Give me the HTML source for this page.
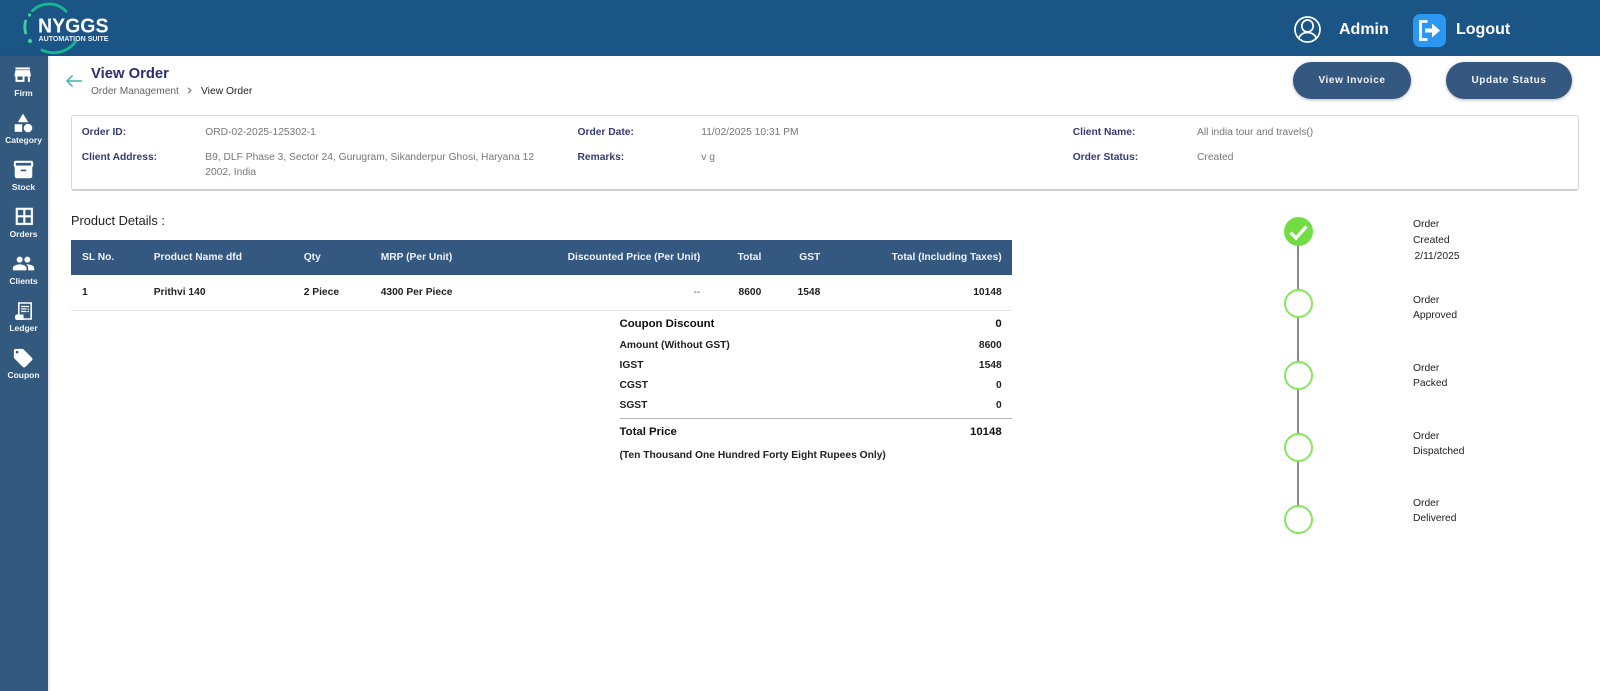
<!DOCTYPE html>
<html lang="en">
<head>
<meta charset="utf-8">
<title>View Order</title>
<style>
*{box-sizing:border-box}
html,body{margin:0;padding:0;width:1600px;height:691px;overflow:hidden;background:#fff;font-family:"Liberation Sans",Arial,sans-serif}
.a{position:absolute}
.t{position:absolute;white-space:nowrap;line-height:16px;height:16px}
.r{text-align:right}
.lb{font-size:10.25px;font-weight:bold;color:#363b72}
.vl{font-size:10.25px;color:#777}
.th{font-size:10.25px;font-weight:bold;color:#eef2f6}
.td{font-size:10.25px;font-weight:bold;color:#222}
.s{font-size:10.25px;font-weight:bold;color:#222}
.b{font-size:11.4px;font-weight:bold;color:#111}
.nav{font-size:8.5px;font-weight:bold;color:#f4f6f9;left:0;width:47px;text-align:center}
.tl{font-size:10.3px;color:#222}
.ic{position:absolute;fill:#fff;stroke:#fff;stroke-width:.25}
.btn{position:absolute;background:#34587f;border-radius:19px;color:#f2f5f8;font-size:10px;font-weight:bold;letter-spacing:.6px;text-align:center;line-height:37px;height:37px;box-shadow:0 1px 3px rgba(0,0,0,.3)}
.c{position:absolute;left:1283.5px;width:29px;height:29px;border-radius:50%;border:2px solid #85e65c;background:#fff}
</style>
</head>
<body>
<div class="a" style="left:0;top:0;width:1600px;height:56px;background:#1b5586"></div>
<svg class="a" style="left:0;top:0" width="130" height="56" viewBox="0 0 130 56">
<g fill="none" stroke-linecap="round">
<path d="M32.500 10.700A23.500 23.500 0 0 1 66 11.300" stroke="#16b98f" stroke-width="2.800"/>
<path d="M25.600 21A23.500 23.500 0 0 0 25.600 33" stroke="#3ed09a" stroke-width="2.800"/>
<path d="M42 50A27 27 0 0 0 76 41" stroke="#16b98f" stroke-width="2.800"/>
</g>
<circle cx="29.500" cy="15" r="1.600" fill="#3ed09a"/>
<circle cx="30" cy="41" r="2.100" fill="#3ed09a"/>
<text x="38" y="32.500" font-family="Liberation Sans" font-weight="bold" font-size="20.500" fill="#fff" textLength="70.500" lengthAdjust="spacingAndGlyphs">NYGGS</text>
<text x="38.500" y="41" font-family="Liberation Sans" font-weight="bold" font-size="7.500" fill="#e8eef4" textLength="70" lengthAdjust="spacingAndGlyphs">AUTOMATION SUITE</text>
</svg>

<svg class="a" style="left:1294px;top:16px" width="27" height="27" viewBox="0 0 27 27" fill="none" stroke="#fff" stroke-width="1.700">
<circle cx="13.500" cy="13.500" r="12.500"/>
<ellipse cx="13.500" cy="10" rx="5.700" ry="6"/>
<path d="M4.800 22.500C5.800 18.800 9 16.500 13.500 16.500s7.700 2.300 8.700 6"/>
</svg>
<div class="t" style="left:1339px;top:22px;font-size:16px;font-weight:bold;color:#fff">Admin</div>
<svg class="a" style="left:1413px;top:14px" width="33" height="33" viewBox="0 0 33 33">
<rect width="33" height="33" rx="7" fill="#2a97f0"/>
<path d="M14.500 7.500H7.500v18h7" fill="none" stroke="#fff" stroke-width="2.800"/>
<path d="M12 14.500h7V9.500l8 7-8 7v-5h-7z" fill="#fff"/>
</svg>
<div class="t" style="left:1456px;top:22px;font-size:16px;font-weight:bold;color:#fff">Logout</div>

<div class="a" style="left:0;top:56px;width:48px;height:635px;background:#34597f;box-shadow:1px 0 2px rgba(0,0,0,.15)"></div>
<svg class="ic" style="left:12.300px;top:64.400px" width="21.300" height="21.300" viewBox="0 0 24 24"><path d="M20 4H4v2h16V4zm1 10v-2l-1-5H4l-1 5v2h1v6h10v-6h4v6h2v-6h1zm-9 4H6v-4h6v4z"/></svg>
<div class="t nav" style="top:85px">Firm</div>
<svg class="ic" style="left:12.200px;top:112px" width="22" height="22" viewBox="0 0 24 24"><path d="M12 2l-5.500 9h11z"/><circle cx="17.500" cy="17.500" r="4.500"/><path d="M3 13.500h8v8H3z"/></svg>
<div class="t nav" style="top:132px">Category</div>
<svg class="ic" style="left:12.100px;top:158px" width="23" height="23" viewBox="0 0 24 24"><path d="M20 3H4a2 2 0 0 0-2 2v3c0 .7.4 1.400 1 1.700V19c0 1.100 1.100 2 2 2h14c.9 0 2-.9 2-2V9.700c.6-.3 1-1 1-1.700V5a2 2 0 0 0-2-2zm-5 11H9v-2h6v2zm5-6H4V5h16v3z"/></svg>
<div class="t nav" style="top:179px">Stock</div>
<svg class="ic" style="left:12.500px;top:205px" width="22.700" height="22.700" viewBox="0 0 24 24"><path d="M3 3v18h18V3H3zm8 16H5v-6h6v6zm0-8H5V5h6v6zm8 8h-6v-6h6v6zm0-8h-6V5h6v6z"/></svg>
<div class="t nav" style="top:225.500px">Orders</div>
<svg class="ic" style="left:12px;top:252px" width="23" height="23" viewBox="0 0 24 24"><path d="M16 11c1.660 0 2.990-1.340 2.990-3S17.660 5 16 5c-1.660 0-3 1.340-3 3s1.340 3 3 3zm-8 0c1.660 0 2.990-1.340 2.990-3S9.660 5 8 5C6.340 5 5 6.340 5 8s1.340 3 3 3zm0 2c-2.330 0-7 1.170-7 3.500V19h14v-2.500c0-2.330-4.670-3.500-7-3.500zm8 0c-.29 0-.62.02-.97.05 1.160.84 1.970 1.970 1.970 3.450V19h6v-2.500c0-2.330-4.670-3.500-7-3.500z"/></svg>
<div class="t nav" style="top:272.500px">Clients</div>
<svg class="a" style="left:15px;top:302px" width="17" height="18" viewBox="0 0 17 18">
<path d="M3.800 13V1h12.400v16H7" fill="none" stroke="#fff" stroke-width="1.600"/>
<path d="M6 4.500h8M6 7h5.500M12.500 7H14M6 9.500h5.500M12.500 9.500H14" stroke="#fff" stroke-width="1.300"/>
<path d="M0 14.500c0-1.200 1-2 2-2h6.500v3c0 1.500.8 2.500 2 2.500H2c-1.200 0-2-1-2-2z" fill="#fff"/>
</svg>
<div class="t nav" style="top:319.500px">Ledger</div>
<svg class="a" style="left:12px;top:347px;fill:#fff" width="22.300" height="22.300" viewBox="0 0 24 24"><path fill-rule="evenodd" d="M21.410 11.580l-9-9C12.050 2.220 11.550 2 11 2H4c-1.100 0-2 .9-2 2v7c0 .55.22 1.050.59 1.420l9 9c.36.36.86.58 1.410.58.55 0 1.050-.22 1.410-.59l7-7c.37-.36.59-.86.59-1.410 0-.55-.23-1.060-.59-1.420zM5.500 7C4.670 7 4 6.330 4 5.500S4.670 4 5.500 4 7 4.670 7 5.500 6.330 7 5.500 7z"/></svg>
<div class="t nav" style="top:366.500px">Coupon</div>

<svg class="a" style="left:65px;top:74px" width="18" height="14" viewBox="0 0 18 14" fill="none" stroke="#3db4b2" stroke-width="1.500"><path d="M17 7H2M7.500 1.500L2 7l5.500 5.500"/></svg>
<div class="t" style="left:91px;top:65.500px;font-size:14.800px;font-weight:bold;color:#2a2f6e">View Order</div>
<div class="t" style="left:91px;top:84px;font-size:10.150px;color:#666">Order Management</div>
<svg class="a" style="left:187px;top:87px" width="5" height="7" viewBox="0 0 5 7" fill="none" stroke="#666" stroke-width="1"><path d="M1 .7L4 3.500 1 6.300"/></svg>
<div class="t" style="left:201px;top:84px;font-size:10.300px;color:#222">View Order</div>

<div class="btn" style="left:1293px;top:62px;width:118px">View Invoice</div>
<div class="btn" style="left:1446px;top:62px;width:126px">Update Status</div>

<div class="a" style="left:71px;top:114.500px;width:1507.500px;height:76px;border:1px solid #d8d8d8;border-bottom:2px solid #d0d0d0;border-radius:3px;background:#fff"></div>
<div class="t lb" style="left:81.700px;top:125px">Order ID:</div>
<div class="t vl" style="left:205.300px;top:125px">ORD-02-2025-125302-1</div>
<div class="t lb" style="left:81.700px;top:150px">Client Address:</div>
<div class="t vl" style="left:205.300px;top:150px">B9, DLF Phase 3, Sector 24, Gurugram, Sikanderpur Ghosi, Haryana 12</div>
<div class="t vl" style="left:205.300px;top:165px">2002, India</div>
<div class="t lb" style="left:577.500px;top:125px">Order Date:</div>
<div class="t vl" style="left:701.300px;top:125px">11/02/2025 10:31 PM</div>
<div class="t lb" style="left:577.500px;top:150px">Remarks:</div>
<div class="t vl" style="left:701.300px;top:150px">v g</div>
<div class="t lb" style="left:1072.700px;top:125px">Client Name:</div>
<div class="t vl" style="left:1197px;top:125px">All india tour and travels()</div>
<div class="t lb" style="left:1072.700px;top:150px">Order Status:</div>
<div class="t vl" style="left:1197px;top:150px">Created</div>

<div class="t" style="left:71px;top:213px;font-size:12.800px;color:#222">Product Details :</div>

<div class="a" style="left:71px;top:240px;width:941px;height:35px;background:#34587f"></div>
<div class="t th" style="left:82px;top:250px">SL No.</div>
<div class="t th" style="left:153.700px;top:250px">Product Name dfd</div>
<div class="t th" style="left:303.700px;top:250px">Qty</div>
<div class="t th" style="left:380.700px;top:250px">MRP (Per Unit)</div>
<div class="t th r" style="right:899.700px;top:250px">Discounted Price (Per Unit)</div>
<div class="t th r" style="right:838.700px;top:250px">Total</div>
<div class="t th r" style="right:779.700px;top:250px">GST</div>
<div class="t th r" style="right:598.300px;top:250px">Total (Including Taxes)</div>

<div class="t td" style="left:82px;top:285px">1</div>
<div class="t td" style="left:153.700px;top:285px">Prithvi 140</div>
<div class="t td" style="left:303.700px;top:285px">2 Piece</div>
<div class="t td" style="left:380.700px;top:285px">4300 Per Piece</div>
<div class="t td r" style="right:899.700px;top:285px;font-weight:normal;color:#555">--</div>
<div class="t td r" style="right:838.700px;top:285px">8600</div>
<div class="t td r" style="right:779.700px;top:285px">1548</div>
<div class="t td r" style="right:598.300px;top:285px">10148</div>
<div class="a" style="left:71px;top:310px;width:941px;height:1px;background:#e4e4e4"></div>

<div class="t b" style="left:619.500px;top:316px">Coupon Discount</div>
<div class="t b r" style="right:598.300px;top:316px">0</div>
<div class="t s" style="left:619.500px;top:338px">Amount (Without GST)</div>
<div class="t s r" style="right:598.300px;top:338px">8600</div>
<div class="t s" style="left:619.500px;top:358px">IGST</div>
<div class="t s r" style="right:598.300px;top:358px">1548</div>
<div class="t s" style="left:619.500px;top:378px">CGST</div>
<div class="t s r" style="right:598.300px;top:378px">0</div>
<div class="t s" style="left:619.500px;top:398px">SGST</div>
<div class="t s r" style="right:598.300px;top:398px">0</div>
<div class="a" style="left:620px;top:418px;width:392px;height:1px;background:#b4b4b4"></div>
<div class="t b" style="left:619.500px;top:424px">Total Price</div>
<div class="t b r" style="right:598.300px;top:424px">10148</div>
<div class="t s" style="left:619.500px;top:446px;top:448px">(Ten Thousand One Hundred Forty Eight Rupees Only)</div>

<div class="a" style="left:1297.200px;top:235px;width:1.500px;height:285px;background:#8a8a8a"></div>
<svg class="a" style="left:1283.500px;top:216.500px" width="29" height="29" viewBox="0 0 29 29">
<circle cx="14.500" cy="14.500" r="14.500" fill="#71dd42"/>
<path d="M6.500 15.500l5.500 5.500L22.500 9.500" fill="none" stroke="#fff" stroke-width="3.200"/>
</svg>
<div class="c" style="top:288.500px"></div>
<div class="c" style="top:361px"></div>
<div class="c" style="top:433px"></div>
<div class="c" style="top:505px"></div>

<div class="t tl" style="left:1413px;top:217px">Order</div>
<div class="t tl" style="left:1413px;top:233px">Created</div>
<div class="t tl" style="left:1414.500px;top:249px">2/11/2025</div>
<div class="t tl" style="left:1413px;top:293px">Order</div>
<div class="t tl" style="left:1413px;top:308px">Approved</div>
<div class="t tl" style="left:1413px;top:361px">Order</div>
<div class="t tl" style="left:1413px;top:376px">Packed</div>
<div class="t tl" style="left:1413px;top:429px">Order</div>
<div class="t tl" style="left:1413px;top:444px">Dispatched</div>
<div class="t tl" style="left:1413px;top:496px">Order</div>
<div class="t tl" style="left:1413px;top:511px">Delivered</div>
</body>
</html>
